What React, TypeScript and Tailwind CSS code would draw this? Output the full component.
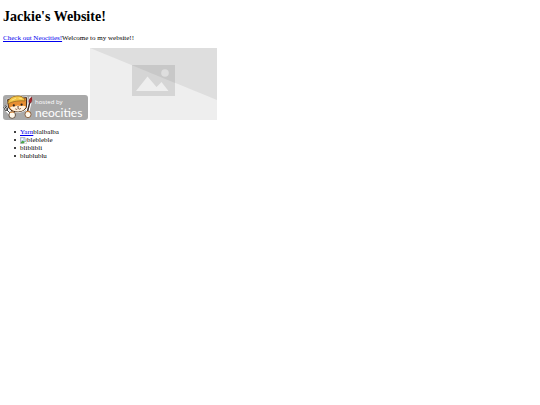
const listItems = [
  { id: "yarn", link: "Yarn", text: "blalbalba" },
  { id: "ble", icon: true, text: "blebleble" },
  { id: "bli", text: "bliblibli" },
  { id: "blu", text: "blublublu" },
];

function CatArtist() {
  return (
    <svg viewBox="0 0 32 25" className="h-[25px] w-8 shrink-0" aria-hidden="true">
      {/* fork */}
      <path d="M8 19 2.4 13.4" stroke="#fff" strokeWidth="3.6" strokeLinecap="round" />
      <path
        d="M8 19 4 15M.9 12.6 2.2 15.4 4.4 15.2 4.6 13 2.6 10.8M2.2 12 3.6 14.2"
        fill="none"
        stroke="#3c3c3c"
        strokeWidth="1"
        strokeLinecap="round"
      />
      {/* brush */}
      <path d="M24.4 17 27.8 3.4" stroke="#fff" strokeWidth="3.6" strokeLinecap="round" />
      <path d="M24.6 16 26.8 7.4" stroke="#3d2a24" strokeWidth="1.5" />
      <path d="M25.8 7.4C25.6 4.6 27.2 3 28.8 2 29.4 4 29 6.4 27.8 8Z" fill="#a8242a" stroke="#5a1a1c" strokeWidth="0.5" />
      {/* head */}
      <path
        d="M5.4 12 4.6 4.6 8.4 3.6C11 .8 18 .4 20 3L23.6 2.6 23.4 12.4C21 17.6 9.4 18.4 6.4 13.6Z"
        fill="#e88f34"
        stroke="#fff"
        strokeWidth="2"
        strokeLinejoin="round"
      />
      <path
        d="M5.4 12 4.6 4.6 8.4 3.6C11 .8 18 .4 20 3L23.6 2.6 23.4 12.4C21 17.6 9.4 18.4 6.4 13.6Z"
        fill="#e88f34"
        stroke="#3f2a1c"
        strokeWidth="1"
        strokeLinejoin="round"
      />
      <path d="M7 12.6C9 10.8 11.4 12.4 14.4 10.6 17.6 11.8 20 9.8 22.8 11.4 21.6 15.6 18 16.4 14.4 16.4 10.4 16.4 8 15 7 12.6Z" fill="#fff0dc" />
      {/* beret */}
      <path d="M4.8 9C5 3.4 10 .8 15 1 19 1 21.8 3 22 6 17 5.4 10 6 4.8 9Z" fill="#f3c548" stroke="#8c621c" strokeWidth="0.7" />
      <path d="M8.6 5.2 13 3.2M15.6 3 19 3.8" stroke="#ffe88c" strokeWidth="0.9" />
      <circle cx="10.8" cy="10.4" r="1.1" fill="#2c211b" />
      <circle cx="18.6" cy="9.6" r="1.1" fill="#2c211b" />
      <path d="M14 11.6H16.2L15 13Z" fill="#392019" />
      <path d="M12.2 13.8Q14.2 15.4 15 13.4Q16.2 15 18 13.4" fill="none" stroke="#6a3823" strokeWidth="0.7" />
      {/* paws */}
      <ellipse cx="9.2" cy="20" rx="3.3" ry="3.4" fill="#fff7ea" stroke="#4a3627" strokeWidth="0.8" />
      <ellipse cx="25" cy="19.4" rx="3" ry="3.3" fill="#fff7ea" stroke="#7a4a26" strokeWidth="0.8" />
      <path d="M7.2 17.6Q9 16.4 11 17.4M23.4 16.8Q25 16 27 17.2" fill="none" stroke="#d98432" strokeWidth="1" />
    </svg>
  );
}

function NeocitiesBadge() {
  return (
    <a
      href="#neocities"
      className="flex h-[25px] w-[85px] shrink-0 rounded-[3px] bg-[#a9a9a9] font-['Open_Sans',sans-serif] text-white"
    >
      <CatArtist />
      <span className="flex flex-col pt-[3px]">
        <span className="text-[6px] leading-[8px]">hosted by</span>
        <span className="font-['Lato',sans-serif] text-[12px] leading-[13px]">neocities</span>
      </span>
    </a>
  );
}

function PlaceholderImage() {
  return (
    <svg viewBox="0 0 127 72" className="h-[72px] w-[127px] shrink-0" role="img" aria-label="Placeholder">
      <path d="M0 0H127V72H0Z" fill="#eee" />
      <path d="M0 0H127V52Z" fill="#dedede" />
      <path d="M42 17H85V48H42Z" fill="#d5d5d5" />
      <path d="M42 17H85V35L42 17.2Z" fill="#c8c8c8" />
      <circle cx="75" cy="25" r="3.8" fill="#dedede" />
      <path d="M46 43 57.5 28.5 66.5 39 71.5 34 78.5 43Z" fill="#eee" />
    </svg>
  );
}

function BrokenImageIcon() {
  return (
    <svg viewBox="0 0 16 16" className="inline-block h-[7px] w-[7px] align-bottom" aria-hidden="true">
      <path d="M1 1H11L15 5V15H1Z" fill="#c4d8f4" stroke="#a4a4a4" strokeWidth="1.5" />
      <path d="M11 1V5H15" fill="#fff" stroke="#a4a4a4" />
      <circle cx="5" cy="5" r="2" fill="#fff" />
      <path d="M2 14V12L6 8 10 11 13 8V10L8 14Z" fill="#4ba546" />
      <path d="M8 15 15 9V15Z" fill="#fff" />
    </svg>
  );
}

export default function App() {
  return (
    <main className="bg-white px-[3px] pt-2.5 font-['Liberation_Serif',serif] text-[7px] leading-2 text-black">
      <h1 className="text-[14px] leading-[14px] font-bold">Jackie's Website!</h1>
      <p className="mt-2.5">
        <a href="#neocities" className="text-[#0000ee] underline">
          Check out Neocities!
        </a>
        Welcome to my website!!
      </p>

      <div className="mt-1.5 flex items-end gap-0.5">
        <NeocitiesBadge />
        <PlaceholderImage />
      </div>

      <ul className="mt-2 pl-[11px]">
        {listItems.map((item) => (
          <li
            key={item.id}
            className="flex items-center before:mr-1 before:size-0.5 before:rounded-full before:bg-black"
          >
            <span>
              {item.link ? (
                <a href="#yarn" className="text-[#0000ee] underline">
                  {item.link}
                </a>
              ) : null}
              {item.icon ? <BrokenImageIcon /> : null}
              {item.text}
            </span>
          </li>
        ))}
      </ul>
    </main>
  );
}
